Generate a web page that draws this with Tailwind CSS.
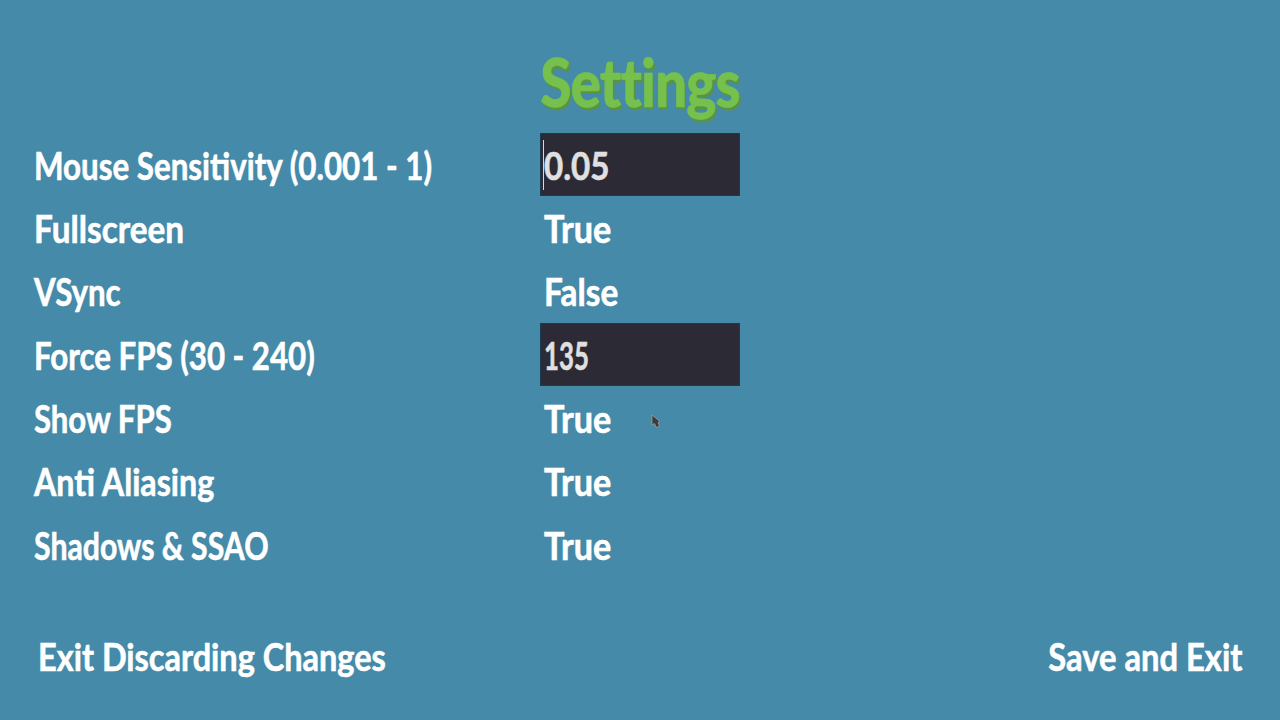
<!DOCTYPE html>
<html lang="en">
  <head>
    <meta charset="UTF-8" />
    <script src="https://cdn.jsdelivr.net/npm/@tailwindcss/browser@4"></script>
    <title>Settings</title>
  </head>
  <body>
    <div class="relative h-[720px] w-[1280px] overflow-hidden bg-[#458aa8] font-['Lato','Roboto',sans-serif] font-bold text-[38px] leading-none text-white [-webkit-text-stroke:0.6px_currentColor]">
      <h1 class="ml-[540px] flex h-[133px] w-[200px] items-center justify-center pt-[30px] text-[66px] font-black tracking-[-1px] text-[#76c04e] [text-shadow:2px_3px_0_#5a9440]">
        <span class="inline-block scale-x-[0.86] whitespace-nowrap">Settings</span>
      </h1>
      <main class="grid grid-cols-[506px_200px] auto-rows-[63.33px] pl-[34px]">
        <div class="flex items-center"><span class="inline-block origin-left scale-x-[0.824] whitespace-nowrap">Mouse Sensitivity (0.001 - 1)</span></div>
        <div class="flex items-center border border-[#1a3a55] bg-[#2c2a35] pl-[2px] text-[#e0e0e0]">
          <span class="h-[50px] w-px shrink-0 bg-[#d8d8d8]"></span>
          <span class="inline-block origin-left scale-x-[0.87]">0.05</span>
        </div>
        <div class="flex items-center"><span class="inline-block origin-left scale-x-[0.877]">Fullscreen</span></div>
        <div class="flex items-center pl-[4px]"><span class="inline-block origin-left scale-x-[0.899]">True</span></div>
        <div class="flex items-center"><span class="inline-block origin-left scale-x-[0.822]">VSync</span></div>
        <div class="flex items-center pl-[4px]"><span class="inline-block origin-left scale-x-[0.877]">False</span></div>
        <div class="flex items-center"><span class="inline-block origin-left scale-x-[0.822] whitespace-nowrap">Force FPS (30 - 240)</span></div>
        <div class="flex items-center border border-[#1a3a55] bg-[#2c2a35] pl-[3px] text-[#e0e0e0]"><span class="inline-block origin-left scale-x-[0.678]">135</span></div>
        <div class="flex items-center"><span class="inline-block origin-left scale-x-[0.818]">Show FPS</span></div>
        <div class="flex items-center pl-[4px]"><span class="inline-block origin-left scale-x-[0.899]">True</span></div>
        <div class="flex items-center"><span class="inline-block origin-left scale-x-[0.848]">Anti Aliasing</span></div>
        <div class="flex items-center pl-[4px]"><span class="inline-block origin-left scale-x-[0.899]">True</span></div>
        <div class="flex items-center"><span class="inline-block origin-left scale-x-[0.796] whitespace-nowrap">Shadows &amp; SSAO</span></div>
        <div class="flex items-center pl-[4px]"><span class="inline-block origin-left scale-x-[0.899]">True</span></div>
      </main>
      <footer class="mt-[61px] flex items-center justify-between pl-[38px] pr-[38px]">
        <span class="inline-block origin-left scale-x-[0.855] whitespace-nowrap">Exit Discarding Changes</span>
        <span class="inline-block origin-right scale-x-[0.861] whitespace-nowrap">Save and Exit</span>
      </footer>
      <svg class="absolute left-[651px] top-[414px]" width="10" height="15" viewBox="0 0 10 15">
        <path d="M1 1 L1 11 L3.5 9.5 L5.5 13.5 L8.5 12 L7 8.5 L9 7.5 Z" fill="#3b3b3b" stroke="#a8a8a8" stroke-width="0.7"></path>
      </svg>
    </div>
  </body>
</html>
